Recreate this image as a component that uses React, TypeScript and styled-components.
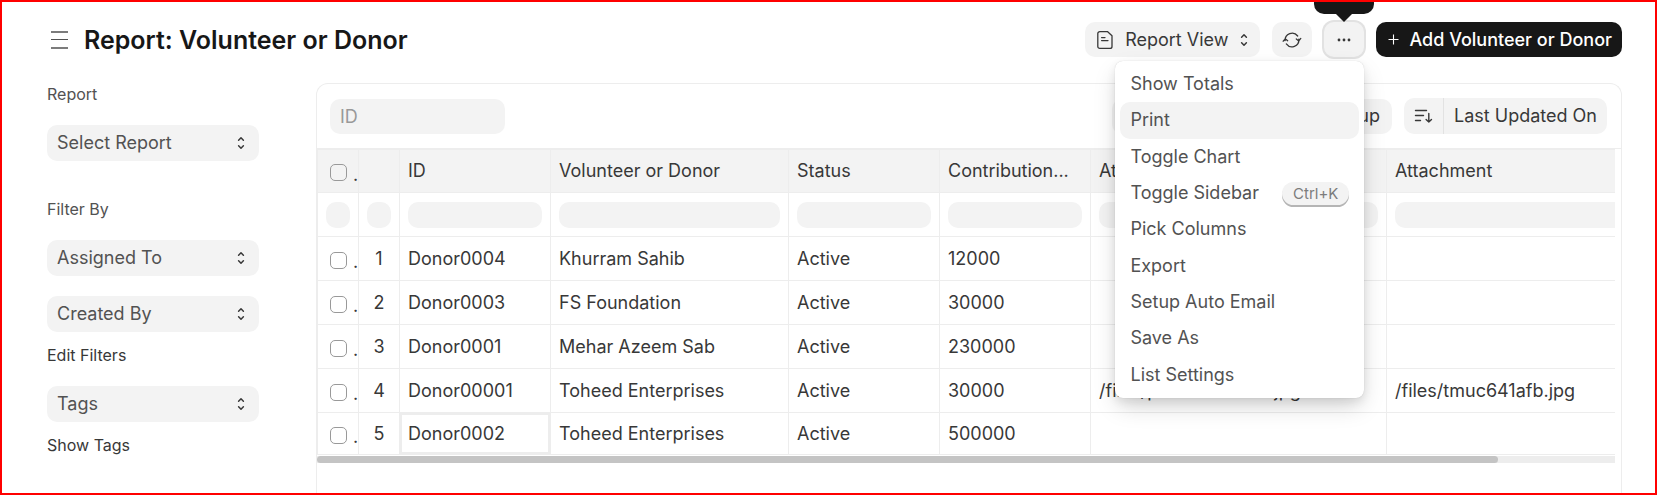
import React from 'react';
import styled, { createGlobalStyle } from 'styled-components';

const GlobalStyle = createGlobalStyle`
  *, *::before, *::after { box-sizing: border-box; }
  body { margin: 0; background: #fff; }
  body, button, input, select {
    font-family: Inter, 'Liberation Sans', sans-serif;
    font-size: 18px;
    line-height: 24px;
    color: #383838;
  }
  button, input, select { margin: 0; border: 0; }
  button { cursor: pointer; }
`;

const Page = styled.div`
  min-height: 100vh;
  display: flex;
  flex-direction: column;
  border: 2px solid #ff0000;
  overflow: hidden;
`;

const Header = styled.header`
  display: flex;
  align-items: center;
  justify-content: space-between;
  padding: 20px 33px 0 49px;
`;

const TitleGroup = styled.div`
  display: flex;
  align-items: center;
  gap: 15px;
`;

const MenuToggle = styled.button`
  display: flex;
  padding: 0;
  background: none;
`;

const Title = styled.h1`
  margin: 0;
  font-size: 25px;
  line-height: 32px;
  font-weight: 600;
  color: #171717;
`;

const Actions = styled.div`
  display: flex;
  gap: 12px;
`;

const Button = styled.button`
  display: flex;
  align-items: center;
  justify-content: center;
  gap: 10px;
  height: 35px;
  padding: 0 12px;
  border-radius: 10px;
  white-space: nowrap;
  background: #f3f3f3;
`;

const ViewButton = styled(Button)`
  gap: 12px;
`;

const IconButton = styled(Button)<{ $focused?: boolean }>`
  width: 40px;
  padding: 0;
  box-shadow: ${p => (p.$focused ? '0 0 0 2px #e2e2e2' : 'none')};
`;

const PrimaryButton = styled(Button)`
  padding: 0 10px 0 12px;
  font-weight: 500;
  color: #fff;
  background: #171717;
`;

const MenuAnchor = styled.div`
  position: relative;
`;

const Tooltip = styled.div`
  position: absolute;
  bottom: 43px;
  left: 50%;
  transform: translateX(-50%);
  padding: 6px 10px 8px;
  border-radius: 10px;
  background: #171717;
  color: #fff;
  font-size: 15px;
  line-height: 20px;
  &::after {
    content: '';
    position: absolute;
    top: 100%;
    left: 50%;
    margin-left: -8px;
    border: 8px solid transparent;
    border-top-color: #171717;
    border-bottom: 0;
  }
`;

const Menu = styled.ul`
  position: absolute;
  z-index: 2;
  top: 39px;
  right: 0;
  display: grid;
  grid-auto-rows: 1fr;
  width: 249px;
  height: 337px;
  margin: 0;
  padding: 5px;
  list-style: none;
  background: #fff;
  border-radius: 8px;
  box-shadow: 0 0 1px rgba(0, 0, 0, 0.2), 0 10px 24px -3px rgba(0, 0, 0, 0.18), 0 4px 10px rgba(0, 0, 0, 0.08);
`;

const MenuItem = styled.button<{ $active?: boolean }>`
  display: flex;
  align-items: center;
  justify-content: space-between;
  width: 100%;
  height: 100%;
  padding: 0 10px;
  border-radius: 10px;
  color: #525252;
  background: ${p => (p.$active ? '#f3f3f3' : 'transparent')};
`;

const Shortcut = styled.kbd`
  padding: 0 11px;
  border-radius: 12px;
  background: #f3f3f3;
  box-shadow: 0 2px 0 #b5b5b5;
  font-family: inherit;
  font-size: 15px;
  line-height: 23px;
  color: #7c7c7c;
`;

const Body = styled.div`
  flex: 1;
  display: flex;
  gap: 57px;
  padding: 26px 33px 0 45px;
`;

const Sidebar = styled.aside`
  flex: none;
  width: 212px;
`;

const SideLabel = styled.div`
  font-size: 16px;
  line-height: 22px;
  color: #525252;
`;

const SideSection = styled.section`
  display: flex;
  flex-direction: column;
  gap: 20px;
  & + & { margin-top: 37px; }
`;

const SideLink = styled.a`
  display: block;
  margin: 11px 0 19px;
  font-size: 16px;
  line-height: 24px;
  color: #383838;
  text-decoration: none;
`;

const SelectBox = styled.label`
  display: flex;
  align-items: center;
  height: 36px;
  padding-right: 14px;
  border-radius: 10px;
  background: #f3f3f3;
`;

const Select = styled.select`
  flex: 1;
  min-width: 0;
  height: 36px;
  padding: 0 10px;
  appearance: none;
  background: none;
  color: #525252;
`;

const Card = styled.main`
  flex: 1;
  min-width: 0;
  border: 1px solid #ededed;
  border-bottom: 0;
  border-radius: 12px 12px 0 0;
`;

const FilterBar = styled.div`
  display: flex;
  align-items: center;
  gap: 12px;
  padding: 14px 14px 14px 13px;
  border-bottom: 1px solid #ededed;
`;

const IdInput = styled.input`
  width: 175px;
  height: 35px;
  margin-right: auto;
  padding: 0 10px;
  border-radius: 10px;
  background: #f3f3f3;
  &::placeholder { color: #999; opacity: 1; }
`;

const FilterGroup = styled.div`
  display: flex;
  gap: 12px;
  width: 280px;
  & > :first-child { flex: 1; }
`;

const SplitButton = styled.div`
  display: flex;
  overflow: hidden;
  border-radius: 10px;
  background: #f3f3f3;
`;

const SplitPart = styled.button`
  display: flex;
  align-items: center;
  height: 36px;
  padding: 0 10px;
  background: none;
  white-space: nowrap;
  & + & { border-left: 1px solid #e2e2e2; }
`;

const TableArea = styled.div`
  margin-right: 6px;
`;

const Scroller = styled.div`
  overflow-x: auto;
  scrollbar-width: none;
  border: 1px solid #ededed;
  border-right: 0;
`;

const Table = styled.table`
  table-layout: fixed;
  width: 1427px;
  border-collapse: separate;
  border-spacing: 0;
  color: #383838;
`;

const Row = styled.tr`
  height: 44px;
  thead &:first-child { height: 43px; background: #f3f3f3; }
  tbody &:last-child { height: 41px; }
  tbody &:last-child td { border-bottom: 0; }
`;

const cell = `
  padding: 0 8px;
  border-right: 1px solid #ededed;
  border-bottom: 1px solid #ededed;
  font-weight: 400;
  text-align: left;
  white-space: nowrap;
  overflow: hidden;
  text-overflow: ellipsis;
`;

const HeadCell = styled.th`${cell}`;
const Cell = styled.td<{ $center?: boolean; $focused?: boolean }>`
  ${cell}
  text-align: ${p => (p.$center ? 'center' : 'left')};
  box-shadow: ${p => (p.$focused ? 'inset 0 0 0 2px #ededed' : 'none')};
`;

const CheckWrap = styled.label`
  display: flex;
  align-items: center;
  gap: 6px;
  padding: 3px 0 0 4px;
  line-height: 20px;
`;

const CheckMark = styled.span`
  padding-top: 4px;
  line-height: 16px;
`;

const Check = styled.input`
  flex: none;
  width: 17px;
  height: 17px;
  appearance: none;
  border: 1px solid #999;
  border-radius: 5px;
  background: transparent;
`;

const ColumnFilter = styled.input`
  display: block;
  width: 100%;
  height: 26px;
  padding: 0 8px;
  border-radius: 10px;
  background: #f3f3f3;
`;

const ScrollTrack = styled.div`
  height: 7px;
  margin-top: 1px;
  background: #ededed;
`;

const ScrollThumb = styled.div`
  width: 91%;
  height: 7px;
  border-radius: 4px;
  background: #c4c4c4;
`;

const Chevrons = () => (
  <svg width="8" height="14" viewBox="0 0 8 14" fill="none" stroke="#383838" strokeWidth="1.5" strokeLinecap="round" strokeLinejoin="round" aria-hidden="true">
    <path d="M1.6 4.2 4 1.8 6.4 4.2M1.6 9.8 4 12.2 6.4 9.8" />
  </svg>
);

const ReportIcon = () => (
  <svg width="16" height="20" viewBox="0 0 16 20" fill="none" stroke="#383838" strokeWidth="1.3" strokeLinecap="round" strokeLinejoin="round" aria-hidden="true">
    <path d="M2.8 1.6h7.6l4.6 4.2v10.6a2 2 0 0 1-2 2H2.8a2 2 0 0 1-2-2V3.6a2 2 0 0 1 2-2ZM4.6 7.6h3.4M4.6 10.6h6.4" />
  </svg>
);

const RefreshIcon = () => (
  <svg width="20" height="18" viewBox="0 0 20 18" fill="none" stroke="#383838" strokeWidth="1.3" strokeLinecap="round" strokeLinejoin="round" aria-hidden="true">
    <path d="M3.1 9.6a7 7 0 0 1 12.6-4.6M16.9 8.2a7 7 0 0 1-12.6 4.7M1.2 10.2l2-2.4 2.5 1.9M18.8 7.4l-2 2.5-2.5-1.9" />
  </svg>
);

const DotsIcon = () => (
  <svg width="14" height="4" viewBox="0 0 14 4" fill="#383838" aria-hidden="true">
    <circle cx="2" cy="2" r="1.4" /><circle cx="7" cy="2" r="1.4" /><circle cx="12" cy="2" r="1.4" />
  </svg>
);

const PlusIcon = () => (
  <svg width="11" height="11" viewBox="0 0 11 11" stroke="#fff" strokeWidth="1.1" aria-hidden="true">
    <path d="M5.5 .5v10M.5 5.5h10" />
  </svg>
);

const SortIcon = () => (
  <svg width="19" height="16" viewBox="0 0 19 16" fill="none" stroke="#383838" strokeWidth="1.4" strokeLinecap="round" strokeLinejoin="round" aria-hidden="true">
    <path d="M1.5 2.5h11M1.5 7.5h8M1.5 12.5h5M14.8 5.5v8.5M12.1 11.4l2.7 2.7 2.7-2.7" />
  </svg>
);

const MenuIcon = () => (
  <svg width="18" height="18" viewBox="0 0 18 18" stroke="#7c7c7c" strokeWidth="2" aria-hidden="true">
    <path d="M0 1h17M0 17h17" />
    <path d="M0 8.5h17" stroke="#525252" strokeWidth="1" />
  </svg>
);

const menuItems = ['Show Totals', 'Print', 'Toggle Chart', 'Toggle Sidebar', 'Pick Columns', 'Export', 'Setup Auto Email', 'Save As', 'List Settings'];

const columns = ['ID', 'Volunteer or Donor', 'Status', 'Contribution...', 'Attach Image', 'Attachment'];
const columnWidths = [41, 41, 151, 238, 151, 151, 296, 358];

const rows = [
  ['Donor0004', 'Khurram Sahib', 'Active', '12000', '', ''],
  ['Donor0003', 'FS Foundation', 'Active', '30000', '', ''],
  ['Donor0001', 'Mehar Azeem Sab', 'Active', '230000', '', ''],
  ['Donor00001', 'Toheed Enterprises', 'Active', '30000', '/files/putmuc641afb.jpg', '/files/tmuc641afb.jpg'],
  ['Donor0002', 'Toheed Enterprises', 'Active', '500000', '', ''],
];

const SideSelect = ({ label }: { label: string }) => (
  <SelectBox>
    <Select aria-label={label}><option>{label}</option></Select>
    <Chevrons />
  </SelectBox>
);

const RowCheck = ({ label }: { label: string }) => (
  <CheckWrap>
    <Check type="checkbox" aria-label={label} />
    <CheckMark>.</CheckMark>
  </CheckWrap>
);

export default function App() {
  return (
    <>
      <GlobalStyle />
      <Page>
        <Header>
          <TitleGroup>
            <MenuToggle aria-label="Toggle sidebar"><MenuIcon /></MenuToggle>
            <Title>Report: Volunteer or Donor</Title>
          </TitleGroup>
          <Actions>
            <ViewButton><ReportIcon />Report View<Chevrons /></ViewButton>
            <IconButton aria-label="Refresh"><RefreshIcon /></IconButton>
            <MenuAnchor>
              <Tooltip role="tooltip">Menu</Tooltip>
              <IconButton $focused aria-label="Menu" aria-expanded="true"><DotsIcon /></IconButton>
              <Menu>
                {menuItems.map(item => (
                  <li key={item}>
                    <MenuItem $active={item === 'Print'}>
                      {item}
                      {item === 'Toggle Sidebar' && <Shortcut>Ctrl+K</Shortcut>}
                    </MenuItem>
                  </li>
                ))}
              </Menu>
            </MenuAnchor>
            <PrimaryButton><PlusIcon />Add Volunteer or Donor</PrimaryButton>
          </Actions>
        </Header>
        <Body>
          <Sidebar>
            <SideSection>
              <SideLabel>Report</SideLabel>
              <SideSelect label="Select Report" />
            </SideSection>
            <SideSection>
              <SideLabel>Filter By</SideLabel>
              <SideSelect label="Assigned To" />
              <SideSelect label="Created By" />
            </SideSection>
            <SideLink href="#filters">Edit Filters</SideLink>
            <SideSelect label="Tags" />
            <SideLink href="#tags">Show Tags</SideLink>
          </Sidebar>
          <Card>
            <FilterBar>
              <IdInput placeholder="ID" aria-label="ID" />
              <FilterGroup>
                <Button>Filter</Button>
                <Button>Add Group</Button>
              </FilterGroup>
              <SplitButton>
                <SplitPart aria-label="Sort direction"><SortIcon /></SplitPart>
                <SplitPart>Last Updated On</SplitPart>
              </SplitButton>
            </FilterBar>
            <TableArea>
              <Scroller>
                <Table>
                  <colgroup>
                    {columnWidths.map((w, i) => <col key={i} width={w} />)}
                  </colgroup>
                  <thead>
                    <Row>
                      <HeadCell><RowCheck label="Select all" /></HeadCell>
                      <HeadCell />
                      {columns.map(c => <HeadCell key={c}>{c}</HeadCell>)}
                    </Row>
                    <Row>
                      {columnWidths.map((_, i) => (
                        <Cell key={i}><ColumnFilter aria-label={`Filter column ${i + 1}`} /></Cell>
                      ))}
                    </Row>
                  </thead>
                  <tbody>
                    {rows.map((row, r) => (
                      <Row key={r}>
                        <Cell><RowCheck label={`Select row ${r + 1}`} /></Cell>
                        <Cell $center>{r + 1}</Cell>
                        {row.map((value, c) => <Cell key={c} $focused={r === 4 && c === 0}>{value}</Cell>)}
                      </Row>
                    ))}
                  </tbody>
                </Table>
              </Scroller>
              <ScrollTrack><ScrollThumb /></ScrollTrack>
            </TableArea>
          </Card>
        </Body>
      </Page>
    </>
  );
}
